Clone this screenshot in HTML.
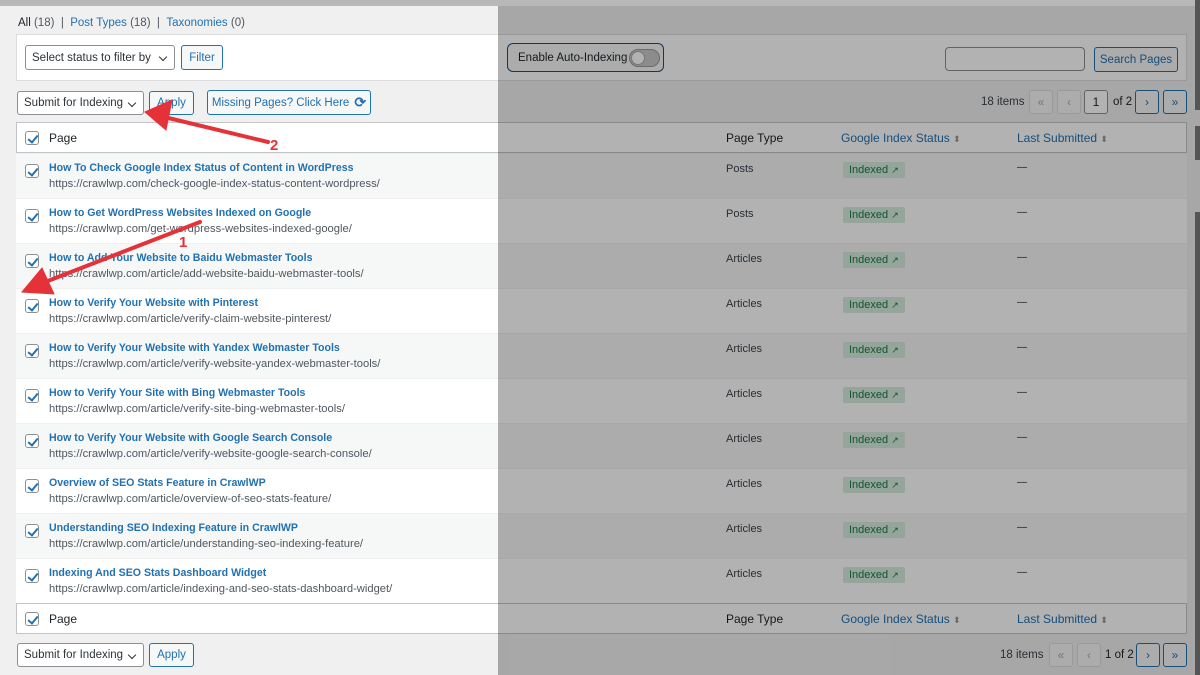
<!DOCTYPE html>
<html><head><meta charset="utf-8"><style>
*{box-sizing:border-box;margin:0;padding:0}
body{width:1200px;height:675px;overflow:hidden;background:#f0f0f1;font-family:"Liberation Sans",sans-serif;font-size:12px;color:#1d2327;position:relative}
.a{position:absolute}
.btn{position:absolute;border:1px solid #2271b1;color:#2271b1;border-radius:3px;background:#f6f7f7;font-size:11.5px;display:flex;align-items:center;justify-content:center}
.sel{position:absolute;border:1px solid #8c8f94;border-radius:3px;background:#fff;font-size:11.5px;display:flex;align-items:center;padding-left:6px;color:#2c3338}
.sel:after{content:"";position:absolute;right:8px;top:8px;width:5px;height:5px;border-right:1.3px solid #333;border-bottom:1.3px solid #333;transform:rotate(45deg)}
.cb{position:absolute;left:25px;width:14px;height:14px;border:1px solid #8c8f94;border-radius:3px;background:#fff}
.cb:after{content:"";position:absolute;left:4px;top:1px;width:4px;height:8px;border-right:2px solid #2271b1;border-bottom:2px solid #2271b1;transform:rotate(40deg)}
.row{position:absolute;left:16px;width:1171px;height:45px;border-top:1px solid #f0f0f1}
.row .t{position:absolute;left:33px;top:8px;color:#2271b1;font-weight:bold;font-size:10.6px}
.row .u{position:absolute;left:33px;top:24px;color:#50575e;font-size:11.2px}
.row .p{position:absolute;left:710px;top:9px;font-size:11px;color:#3c434a}
.row .ix{position:absolute;left:827px;top:8px;background:#d6ecdf;color:#1b7a43;font-size:11px;padding:2px 6px;border-radius:2px}
.row .d{position:absolute;left:1001px;top:8px;font-size:10px}
.pg{position:absolute;width:24px;height:24px;border:1px solid #2271b1;border-radius:3px;color:#2271b1;display:flex;align-items:center;justify-content:center;font-size:12px;background:#f6f7f7}
.pg.dis{border-color:#dcdcde;color:#a7aaad;background:#f6f7f7}
</style></head><body>
<div class="a" style="left:0;top:0;width:1200px;height:6px;background:#b8b8b8"></div>
<div class="a" style="left:18px;top:17px;font-size:11.5px;color:#50575e"><b style="color:#1d2327;font-weight:normal">All</b> (18) &nbsp;| &nbsp;<span style="color:#2271b1">Post Types</span> (18) &nbsp;| &nbsp;<span style="color:#2271b1">Taxonomies</span> (0)</div>
<div class="a" style="left:16px;top:34px;width:1171px;height:47px;background:#fff;border:1px solid #dcdcde"></div>
<div class="sel" style="left:25px;top:45px;width:150px;height:25px">Select status to filter by</div>
<div class="btn" style="left:181px;top:45px;width:42px;height:25px">Filter</div>
<div class="btn" style="left:507px;top:43px;width:157px;height:29px;border-color:#1d4f7a;color:#1d2327;border-radius:6px;justify-content:flex-start;padding-left:10px;font-size:11.5px">Enable Auto-Indexing<span style="position:absolute;left:121px;top:5px;width:31px;height:18px;border-radius:9px;background:#c9c9c9;border:1px solid #999"><span style="position:absolute;left:1px;top:1px;width:14px;height:14px;border-radius:50%;background:#fff;border:1px solid #aaa"></span></span></div>
<div class="a" style="left:945px;top:47px;width:140px;height:24px;border:1px solid #8c8f94;border-radius:4px;background:#fff"></div>
<div class="btn" style="left:1094px;top:47px;width:84px;height:25px">Search Pages</div>
<div class="sel" style="left:17px;top:91px;width:127px;height:24px">Submit for Indexing</div>
<div class="btn" style="left:149px;top:91px;width:45px;height:24px">Apply</div>
<div class="btn" style="left:207px;top:90px;width:164px;height:25px">Missing Pages? Click Here <span style="margin-left:5px;font-size:14px;font-weight:bold">⟳</span></div>
<div class="a" style="left:981px;top:96px;font-size:11.5px;color:#3c434a">18 items</div>
<div class="pg dis" style="left:1029px;top:90px">«</div>
<div class="pg dis" style="left:1057px;top:90px">‹</div>
<div class="pg" style="left:1084px;top:90px;border-color:#8c8f94;color:#1d2327;background:#fff">1</div>
<div class="a" style="left:1113px;top:96px;font-size:11.5px">of 2</div>
<div class="pg" style="left:1135px;top:90px">›</div>
<div class="pg" style="left:1163px;top:90px">»</div>
<div class="a" style="left:16px;top:122px;width:1171px;height:512px;background:#fff;border:1px solid #c3c4c7"></div>
<div class="cb" style="top:131px"></div>
<div class="a" style="left:49px;top:131px;font-size:12px">Page</div>
<div class="a" style="left:726px;top:131px;font-size:12px">Page Type</div>
<div class="a" style="left:841px;top:131px;font-size:12px;color:#2271b1">Google Index Status <span style="color:#999;font-size:9px">⬍</span></div>
<div class="a" style="left:1017px;top:131px;font-size:12px;color:#2271b1">Last Submitted <span style="color:#999;font-size:9px">⬍</span></div>
<div class="a" style="left:17px;top:152px;width:1169px;height:1px;background:#c3c4c7"></div>
<div id="rows"></div>
<div class="a" style="left:17px;top:603px;width:1169px;height:1px;background:#c3c4c7"></div>
<div class="cb" style="top:612px"></div>
<div class="a" style="left:49px;top:612px;font-size:12px">Page</div>
<div class="a" style="left:726px;top:612px;font-size:12px">Page Type</div>
<div class="a" style="left:841px;top:612px;font-size:12px;color:#2271b1">Google Index Status <span style="color:#999;font-size:9px">⬍</span></div>
<div class="a" style="left:1017px;top:612px;font-size:12px;color:#2271b1">Last Submitted <span style="color:#999;font-size:9px">⬍</span></div>
<div class="sel" style="left:17px;top:643px;width:127px;height:24px">Submit for Indexing</div>
<div class="btn" style="left:149px;top:643px;width:45px;height:24px">Apply</div>
<div class="a" style="left:1000px;top:649px;font-size:11.5px;color:#3c434a">18 items</div>
<div class="pg dis" style="left:1049px;top:643px">«</div>
<div class="pg dis" style="left:1077px;top:643px">‹</div>
<div class="a" style="left:1105px;top:649px;font-size:11.5px">1 of 2</div>
<div class="pg" style="left:1136px;top:643px">›</div>
<div class="pg" style="left:1163px;top:643px">»</div>
<script>
var d=[["How To Check Google Index Status of Content in WordPress","https://crawlwp.com/check-google-index-status-content-wordpress/","Posts"],
["How to Get WordPress Websites Indexed on Google","https://crawlwp.com/get-wordpress-websites-indexed-google/","Posts"],
["How to Add Your Website to Baidu Webmaster Tools","https://crawlwp.com/article/add-website-baidu-webmaster-tools/","Articles"],
["How to Verify Your Website with Pinterest","https://crawlwp.com/article/verify-claim-website-pinterest/","Articles"],
["How to Verify Your Website with Yandex Webmaster Tools","https://crawlwp.com/article/verify-website-yandex-webmaster-tools/","Articles"],
["How to Verify Your Site with Bing Webmaster Tools","https://crawlwp.com/article/verify-site-bing-webmaster-tools/","Articles"],
["How to Verify Your Website with Google Search Console","https://crawlwp.com/article/verify-website-google-search-console/","Articles"],
["Overview of SEO Stats Feature in CrawlWP","https://crawlwp.com/article/overview-of-seo-stats-feature/","Articles"],
["Understanding SEO Indexing Feature in CrawlWP","https://crawlwp.com/article/understanding-seo-indexing-feature/","Articles"],
["Indexing And SEO Stats Dashboard Widget","https://crawlwp.com/article/indexing-and-seo-stats-dashboard-widget/","Articles"]];
var h="";d.forEach(function(r,i){var y=153+45*i;h+='<div class="row" style="top:'+y+'px;background:'+(i%2?'#fff':'#f6f7f7')+'"><div class="cb" style="left:9px;top:10px"></div><div class="t">'+r[0]+'</div><div class="u">'+r[1]+'</div><div class="p">'+r[2]+'</div><div class="ix">Indexed <span style="font-size:9px">↗</span></div><div class="d">—</div></div>';});
document.getElementById("rows").outerHTML=h;
</script>
<div class="a" style="left:498px;top:6px;width:702px;height:669px;background:rgba(0,0,0,0.3)"></div>
<div class="a" style="left:1195px;top:0;width:5px;height:110px;background:#555"></div>
<div class="a" style="left:1195px;top:126px;width:5px;height:34px;background:#555"></div>
<div class="a" style="left:1195px;top:212px;width:5px;height:463px;background:#555"></div>
<svg class="a" style="left:0;top:0" width="500" height="675">
<g stroke="#e53238" stroke-width="4" fill="#e53238" stroke-linecap="round">
<line x1="268" y1="142" x2="160" y2="116"/>
<polygon points="145,112 172,100 166,130" stroke-width="1"/>
<line x1="200" y1="222" x2="40" y2="284"/>
<polygon points="22,292 42,268 54,294" stroke-width="1"/>
</g>
<text x="270" y="150" fill="#e53238" font-family="Liberation Sans" font-weight="bold" font-size="15">2</text>
<text x="179" y="247" fill="#e53238" font-family="Liberation Sans" font-weight="bold" font-size="15">1</text>
</svg>
</body></html>
